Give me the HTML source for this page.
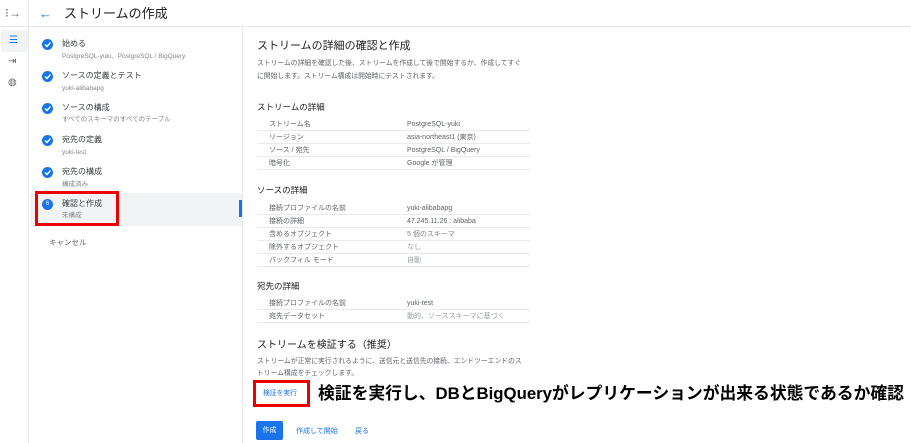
<!DOCTYPE html><html><head><meta charset="utf-8"><style>
*{margin:0;padding:0;box-sizing:border-box}
body{width:911px;height:443px;overflow:hidden;background:#fff;font-family:"Liberation Sans","Noto Sans CJK JP",sans-serif;color:#3c4043;position:relative}
.a{position:absolute;white-space:nowrap;line-height:1}
.t{font-size:8px;color:#3c4043}
.s{font-size:6.5px;color:#80868b}
.chk{position:absolute;left:42px;width:11px;height:11px;border-radius:50%;background:#1a73e8;}
.chk svg{position:absolute;left:1px;top:1px}
.row{position:absolute;left:257px;width:273px;height:13px;border-bottom:1px solid #e8eaed;font-size:7px;color:#5f6368}
.row span{position:absolute;top:3px;line-height:7px}
.row .l{left:12px}.row .v{left:150px}
h3{position:absolute;left:257px;font-size:8.5px;font-weight:normal;color:#202124;line-height:1}
</style></head><body>
<div class="a" style="left:0;top:0;width:29px;height:443px;border-right:1px solid #e8eaed"></div>
<div class="a" style="left:0;top:26px;width:911px;border-top:1px solid #e8eaed"></div>
<div class="a" style="left:5px;top:7px;font-size:12px;color:#5f6368">⁝→</div>
<div class="a" style="left:1px;top:30px;width:27px;height:22px;background:#f1f3f4"></div>
<div class="a" style="left:9px;top:36px;font-size:10px;color:#1a73e8">☰</div>
<div class="a" style="left:8px;top:57px;font-size:10px;color:#5f6368">⇥</div>
<div class="a" style="left:8px;top:78px;font-size:10px;color:#5f6368">◍</div>
<div class="a" style="left:39px;top:7px;font-size:13px;color:#1a73e8">←</div>
<div class="a" style="left:64px;top:7px;font-size:13px;color:#202124">ストリームの作成</div>
<div class="a" style="left:242px;top:27px;height:416px;border-left:1px solid #e8eaed"></div>
<div class="a" style="left:30px;top:193px;width:212px;height:33px;background:#f1f3f4"></div>
<div class="a" style="left:239px;top:200px;width:3px;height:17px;background:#1a73e8"></div>

<div class="chk" style="top:39px"><svg width="9" height="9"><path d="M2 4.5l2 2 3.5-4" stroke="#fff" stroke-width="1.4" fill="none"/></svg></div>
<div class="a t" style="left:62px;top:40px">始める</div><div class="a s" style="left:62px;top:54px">PostgreSQL-yuki、PostgreSQL / BigQuery</div>
<div class="chk" style="top:71px"><svg width="9" height="9"><path d="M2 4.5l2 2 3.5-4" stroke="#fff" stroke-width="1.4" fill="none"/></svg></div>
<div class="a t" style="left:62px;top:72px">ソースの定義とテスト</div><div class="a s" style="left:62px;top:86px">yuki-alibabapg</div>
<div class="chk" style="top:103px"><svg width="9" height="9"><path d="M2 4.5l2 2 3.5-4" stroke="#fff" stroke-width="1.4" fill="none"/></svg></div>
<div class="a t" style="left:62px;top:104px">ソースの構成</div><div class="a s" style="left:62px;top:117px">すべてのスキーマのすべてのテーブル</div>
<div class="chk" style="top:135px"><svg width="9" height="9"><path d="M2 4.5l2 2 3.5-4" stroke="#fff" stroke-width="1.4" fill="none"/></svg></div>
<div class="a t" style="left:62px;top:136px">宛先の定義</div><div class="a s" style="left:62px;top:150px">yuki-test</div>
<div class="chk" style="top:167px"><svg width="9" height="9"><path d="M2 4.5l2 2 3.5-4" stroke="#fff" stroke-width="1.4" fill="none"/></svg></div>
<div class="a t" style="left:62px;top:168px">宛先の構成</div><div class="a s" style="left:62px;top:182px">構成済み</div>
<div class="chk" style="top:199px;font-size:6px;color:#fff;text-align:center;line-height:11px">6</div>
<div class="a t" style="left:62px;top:200px">確認と作成</div><div class="a s" style="left:62px;top:213px">未構成</div>
<div class="a" style="left:35px;top:191px;width:84px;height:35px;border:3px solid #e00"></div>
<div class="a" style="left:49px;top:239px;font-size:7.5px;color:#5f6368">キャンセル</div>

<div class="a" style="left:257px;top:41px;font-size:11px;color:#202124">ストリームの詳細の確認と作成</div>
<div class="a" style="left:257px;top:57px;font-size:6.8px;color:#5f6368;line-height:13px">ストリームの詳細を確認した後、ストリームを作成して後で開始するか、作成してすぐ<br>に開始します。ストリーム構成は開始時にテストされます。</div>
<h3 style="top:103px">ストリームの詳細</h3>
<div class="row" style="top:118px"><span class="l">ストリーム名</span><span class="v">PostgreSQL-yuki</span></div>
<div class="row" style="top:131px"><span class="l">リージョン</span><span class="v">asia-northeast1 (東京)</span></div>
<div class="row" style="top:144px"><span class="l">ソース / 宛先</span><span class="v">PostgreSQL / BigQuery</span></div>
<div class="row" style="top:157px"><span class="l">暗号化</span><span class="v">Google が管理</span></div>
<h3 style="top:186px">ソースの詳細</h3>
<div class="row" style="top:202px"><span class="l">接続プロファイルの名前</span><span class="v">yuki-alibabapg</span></div>
<div class="row" style="top:215px"><span class="l">接続の詳細</span><span class="v">47.245.11.26 : alibaba</span></div>
<div class="row" style="top:228px"><span class="l">含めるオブジェクト</span><span class="v" style="color:#80868b">5 個のスキーマ</span></div>
<div class="row" style="top:241px"><span class="l">除外するオブジェクト</span><span class="v" style="color:#9aa0a6">なし</span></div>
<div class="row" style="top:254px"><span class="l">バックフィル モード</span><span class="v" style="color:#9aa0a6">自動</span></div>
<h3 style="top:282px">宛先の詳細</h3>
<div class="row" style="top:297px"><span class="l">接続プロファイルの名前</span><span class="v">yuki-test</span></div>
<div class="row" style="top:310px"><span class="l">宛先データセット</span><span class="v" style="color:#9aa0a6">動的、ソーススキーマに基づく</span></div>
<div class="a" style="left:257px;top:341px;font-size:10px;color:#202124">ストリームを検証する（推奨）</div>
<div class="a" style="left:257px;top:356px;font-size:6.8px;color:#5f6368;line-height:12px">ストリームが正常に実行されるように、送信元と送信先の接続、エンドツーエンドのス<br>トリーム構成をチェックします。</div>
<div class="a" style="left:253px;top:380px;width:57px;height:27px;border:3px solid #e00"></div>
<div class="a" style="left:263px;top:391px;font-size:6.8px;color:#1a73e8">検証を実行</div>
<div class="a" style="left:318px;top:386px;font-size:16.8px;font-weight:bold;color:#000">検証を実行し、DBとBigQueryがレプリケーションが出来る状態であるか確認</div>
<div class="a" style="left:256px;top:421px;width:27px;height:19px;background:#1a73e8;border-radius:2px;color:#fff;font-size:7px;text-align:center;line-height:19px">作成</div>
<div class="a" style="left:296px;top:428px;font-size:7px;color:#1a73e8">作成して開始</div>
<div class="a" style="left:355px;top:428px;font-size:7px;color:#1a73e8">戻る</div>
</body></html>
